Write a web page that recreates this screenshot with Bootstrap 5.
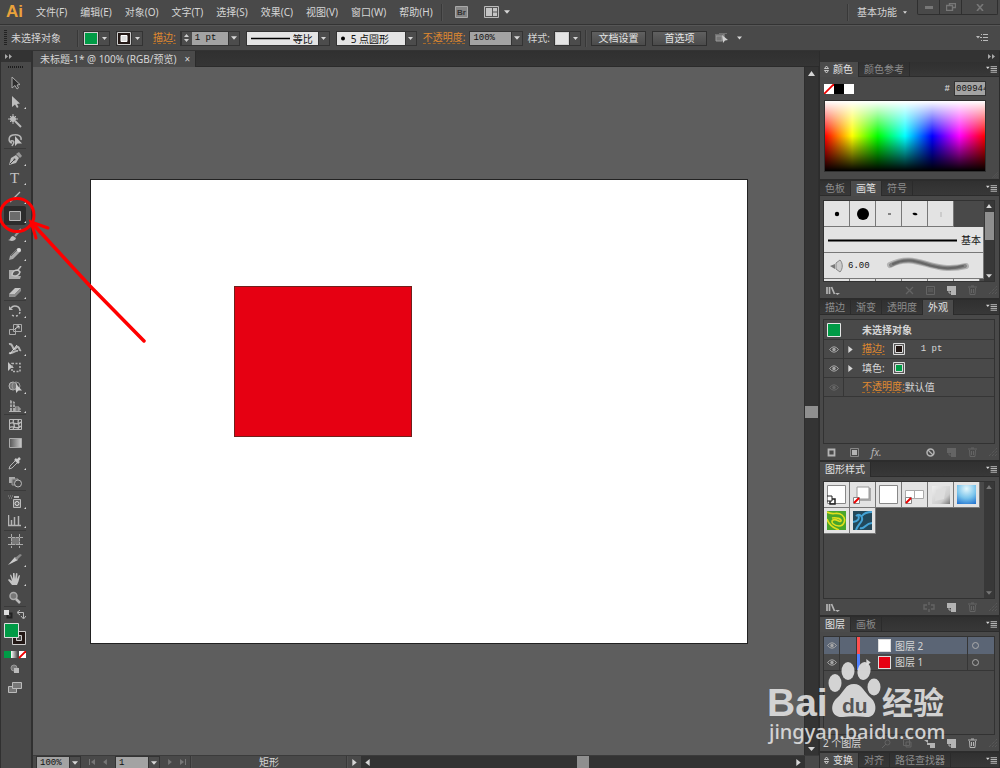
<!DOCTYPE html>
<html lang="zh-CN">
<head>
<meta charset="utf-8">
<meta name="viewport" content="width=device-width, initial-scale=1">
<title>未标题-1</title>
<link rel="stylesheet" href="https://cdn.jsdelivr.net/npm/bootstrap@5.3.0/dist/css/bootstrap.min.css">
<style>
:root{--ui:#494949;--edge:#323232;--ink:#d6d6d6;--dim:#8c8c8c;--orange:#e08a30;--green:#009b46}
body{background:var(--ui);color:var(--ink);font:10px/14px "Noto Sans","Noto Sans CJK SC",sans-serif;overflow:hidden}
svg{display:block;flex:none}
a{color:inherit;text-decoration:none}
button,input,select{font:inherit;color:inherit;border:0;border-radius:0;padding:0;margin:0;background:none;display:block;min-width:0}
select{appearance:none}
.numfont{font-family:"Liberation Mono","Noto Sans CJK SC",monospace;font-size:9px}
.menubar{height:25px;border-bottom:1px solid #333;padding-left:6px}
.applogo{color:#e9a23b;font:bold 17px/24px "Liberation Sans",sans-serif;width:30px}
.menubar nav{gap:13px}
.workspace{gap:6px;margin-right:10px}
.vsep{width:2px;height:17px;border-left:1px solid #383838;border-right:1px solid #525252}
.winbtns{border:1px solid #2f2f2f;border-top:0;border-radius:0 0 2px 2px;height:15px;margin-right:2px}
.winbtns button{height:14px;width:22px;display:grid;place-items:center;border-right:1px solid #2f2f2f}
.winbtns button:last-child{border:0;width:35px}
.optbar{height:26px;border-top:1px solid #565656;border-bottom:1px solid #333;padding:0 12px 0 4px}
.grip{width:3px;height:16px;background:repeating-linear-gradient(#222 0 1px,transparent 1px 2px);margin-right:4px}
.gap-l{margin-left:6px}
.combo{height:15px;border:1px solid #333;background:#3d3d3d}
.combo>input{background:#a3a3a3;color:#111;height:13px;padding-left:3px}
.combo>input.hexin{padding-left:1px;width:30px}
.drop{width:11px;height:13px;display:grid;place-items:center;background:#4c4c4c;border-left:1px solid #333}
.chip{width:14px;height:13px;border:1px solid #cfcfcf}
.lightbox{background:#e4e4e4;color:#111;height:13px}
.lightbox select{height:13px;color:#111}
.fly-a{color:var(--orange);border-bottom:1px dashed #a4692b;line-height:11px}
.strokelink{margin:0 4px 0 10px}
.pushbtn{height:15px;width:55px;border:1px solid #2f2f2f;background:linear-gradient(#606060,#4b4b4b);line-height:12px;text-align:center;color:#e4e4e4}
.toolbox{width:33px;border-right:2px solid #303030;border-left:1px solid #303030}
.stripe{height:11px;background:#333}
.toolgroup{box-shadow:0 -1px #3a3a3a;margin:0 5px 0 3px}
.toolgroup.first{box-shadow:none}
.toolgroup button,.tool{width:22px;height:19px;display:grid;place-items:center;position:relative;color:#b9b9b9}
.toolgroup .mini{width:9px;height:14px}
.fly::after{content:"";position:absolute;right:0;bottom:2px;border:solid transparent;border-width:1px;border-right-color:#d8d8d8;border-bottom-color:#d8d8d8}
.toolgroup button.chosen{background:#2c2c2c;border-radius:2px}
.tabstrip{height:16px;background:linear-gradient(#303030,#353535);border-bottom:1px solid #2b2b2b}
.doctab{background:#4a4a4a;height:16px;padding:0 5px 0 7px;border-right:1px solid #2b2b2b;line-height:17px}
.workarea{background:#5e5e5e}
.artboard{position:absolute;left:57px;top:112px;width:658px;height:465px;background:#fff;border:1px solid #222}
.redbox{position:absolute;left:143px;top:106px;width:178px;height:151px;background:#e60012;border:1px solid #70201c}
.vscroll{width:15px;background:#343434;border-left:1px solid #2e2e2e;border-right:1px solid #2e2e2e}
.thumb{background:#8f8f8f}
.statusbar{height:13px;overflow:hidden;border-top:1px solid #3b3b3b;padding-left:3px}
.statusbar .combo{height:13px}
.hscroll{background:#333;height:12px}
.dock{width:181px;border-left:1px solid #2c2c2c;background:#2c2c2c;padding-right:1px}
.pane{background:var(--ui);margin-bottom:2px}
.ptabs{height:15px;background:linear-gradient(#303030,#383838);border-bottom:1px solid #2c2c2c;padding-right:2px}
.ptabs button{height:15px;line-height:15px;padding:0 5px;color:var(--dim);border-right:1px solid #2b2b2b}
.ptabs button.on{background:#4b4b4b;color:#e2e2e2}
.well{border:1px solid #323232;margin:4px 4px 0 3px}
.pfoot{height:16px;padding:0 2px 0 6px}
.pfoot button{display:grid;place-items:center;color:#b4b4b4}
.pfoot .off{color:#646464}
.spectrum{height:72px;margin:4px 13px 0 4px;border:1px solid #303030;background:linear-gradient(#fff,rgba(255,255,255,0) 50%,rgba(0,0,0,0) 50%,#000),linear-gradient(90deg,red,#ff0 17%,#0f0 33%,#0ff 50%,#00f 67%,#f0f 84%,red)}
.tile{width:26px;height:26px;background:#e3e3e3;border-right:1px solid #777;border-bottom:1px solid #777;display:grid;place-items:center}
.sbar{width:10px;flex:none;background:#383838;padding:3px 0}
.approw{height:20px;border-bottom:1px solid #363636}
.approw+.approw{height:19px}
.eyecell{width:20px;align-self:stretch;display:grid;place-items:center;border-right:1px solid #363636;color:#a6a6a6}
.layerrow{height:17px}
.layerrow.on{background:#5b6575}
.layerrow .eyecell{width:16px}
.lock{width:17px;align-self:stretch;border-right:1px solid #363636}
.tgt{width:27px;align-self:stretch;border-left:1px solid #363636;display:grid;align-items:center;padding-left:4px}
.pic{width:13px;height:13px;border:1px solid #ddd}
.overlay-mark{position:absolute;pointer-events:none}
</style>
</head>
<body class="vh-100 d-flex flex-column">

<svg width="0" height="0" class="position-absolute" aria-hidden="true">
  <defs>
    <symbol id="dn" viewBox="0 0 7 4"><path d="M0 0h7L3.500 4z" fill="currentColor"/></symbol>
    <symbol id="rt" viewBox="0 0 5 8"><path d="M0 0v8l5-4z" fill="currentColor"/></symbol>
    <symbol id="lt" viewBox="0 0 5 8"><path d="M5 0v8L0 4z" fill="currentColor"/></symbol>
    <symbol id="up" viewBox="0 0 7 5"><path d="M0 5h7L3.500 0z" fill="currentColor"/></symbol>
    <symbol id="pm" viewBox="0 0 12 8"><path d="M0 1.500h4L2 4z" fill="currentColor"/><path d="M5 1.500h7M5 3.500h7M5 5.500h7M5 7.500h7" stroke="currentColor" stroke-width=".9"/></symbol>
    <symbol id="ud" viewBox="0 0 5 9"><path d="M.5 3.500l2-2.500 2 2.500zM.5 5.500l2 2.500 2-2.500z" fill="none" stroke="currentColor" stroke-width=".8"/></symbol>
    <symbol id="eye" viewBox="0 0 10 7"><path d="M.5 3.500Q5-2 9.500 3.500 5 9 .5 3.500z" fill="none" stroke="currentColor"/><circle cx="5" cy="3.500" r="1.700" fill="currentColor"/></symbol>
    <symbol id="lib" viewBox="0 0 14 9"><path d="M1 1v7M3.500 1v7M5.500 1l3 7" stroke="currentColor" stroke-width="1.700"/><path d="M9 7h5l-2.500 2z" fill="currentColor"/></symbol>
    <symbol id="newi" viewBox="0 0 9 9"><path d="M0 0h9v9H4V5H0z" fill="currentColor"/><path d="M1 6h2v2" fill="none" stroke="currentColor"/></symbol>
    <symbol id="bin" viewBox="0 0 9 10"><path d="M0 2h9M3 1h3M1.500 3l.5 6.500h5L7.500 3M3.500 4v4M5.500 4v4" fill="none" stroke="currentColor"/></symbol>
    <symbol id="gripc" viewBox="0 0 8 8"><path d="M0 8l8-8M3 8l5-5M6 8l2-2" stroke="#606060" stroke-dasharray="1 1"/></symbol>
    <symbol id="none" viewBox="0 0 10 10"><path fill="#fff" d="M0 0h10v10H0z"/><path d="M0 10L10 0" stroke="#e00" stroke-width="1.800"/></symbol>
  </defs>
</svg>

<header class="menubar d-flex align-items-center flex-shrink-0">
  <span class="applogo">Ai</span>
  <nav class="d-flex">
    <a href="#">文件(F)</a><a href="#">编辑(E)</a><a href="#">对象(O)</a><a href="#">文字(T)</a><a href="#">选择(S)</a><a href="#">效果(C)</a><a href="#">视图(V)</a><a href="#">窗口(W)</a><a href="#">帮助(H)</a>
  </nav>
  <span class="vsep ms-2 me-2"></span>
  <button aria-label="Bridge" class="ms-1"><svg width="13" height="12"><path d="M.5.5h12v11H.5z" fill="#858585" stroke="#a9a9a9"/><text x="2" y="9" font-size="8" font-weight="bold" font-family="Liberation Sans" fill="#333">Br</text></svg></button>
  <button aria-label="排列文档" class="ms-3 d-flex align-items-center gap-1"><svg width="16" height="12"><path d="M.5.5h14v11H.5z" fill="#555" stroke="#bbb"/><path d="M2 2h6v8H2zM9 2h4v3.500H9zM9 6.500h4V10H9z" fill="#c5c5c5"/></svg><svg width="6" height="4"><use href="#dn"/></svg></button>
  <span class="vsep ms-auto me-2"></span>
  <button class="workspace d-flex align-items-center">基本功能 <svg width="4" height="3"><use href="#dn"/></svg></button>
  <div class="winbtns d-flex align-self-start">
    <button aria-label="最小化"><svg width="8" height="3"><path fill="#777" d="M0 0h8v3H0z"/></svg></button>
    <button aria-label="还原"><svg width="10" height="8" fill="none" stroke="#777"><path d="M3.500 2.500v-2h6v4h-3M.5 2.500h6v5h-6z" stroke-width="1.400"/></svg></button>
    <button aria-label="关闭"><svg width="8" height="7"><path d="M1 0l6 7M7 0L1 7" stroke="#777" stroke-width="1.600"/></svg></button>
  </div>
</header>

<div class="optbar d-flex align-items-center flex-shrink-0">
  <span class="grip"></span><span style="width:66px">未选择对象</span>
  <span class="vsep me-1"></span>
  <div class="combo d-flex"><span class="chip" style="background:#009b46"></span><button class="drop" aria-label="填色"><svg width="5" height="3"><use href="#dn"/></svg></button></div>
  <div class="combo d-flex gap-l"><svg width="14" height="13"><path d="M.5.5h13v12H.5z" fill="#231815" stroke="#ccc"/><path d="M4 3.500h6v6H4z" fill="#ddd" stroke="#fff"/></svg><button class="drop" aria-label="描边颜色"><svg width="5" height="3"><use href="#dn"/></svg></button></div>
  <a href="#" class="fly-a strokelink">描边:</a>
  <div class="combo d-flex">
    <button class="drop" aria-label="粗细增减"><svg width="5" height="10"><path d="M0 4h5L2.500 1zM0 6h5L2.500 9z" fill="#ccc"/></svg></button>
    <input class="numfont" style="width:36px" value="1 pt" aria-label="描边粗细"><button class="drop" aria-label="粗细列表"><svg width="6" height="4"><use href="#dn"/></svg></button></div>
  <div class="combo d-flex gap-l">
    <label class="lightbox d-flex align-items-center"><svg width="46" height="13"><path d="M4 6.500h39" stroke="#000" stroke-width="1.500"/></svg><select style="width:25px" aria-label="变量宽度"><option>等比</option></select></label><span class="drop"><svg width="5" height="3"><use href="#dn"/></svg></span></div>
  <div class="combo d-flex gap-l">
    <label class="lightbox d-flex align-items-center"><svg width="14" height="13"><circle cx="6" cy="6.500" r="2" fill="#000"/></svg><select style="width:54px" aria-label="画笔定义"><option>5 点圆形</option></select></label><span class="drop"><svg width="5" height="3"><use href="#dn"/></svg></span></div>
  <a href="#" class="fly-a gap-l me-1">不透明度:</a>
  <div class="combo d-flex"><input class="numfont" style="width:41px" value="100%" aria-label="不透明度"><button class="drop" aria-label="不透明度列表"><svg width="6" height="4"><use href="#dn"/></svg></button></div>
  <span class="ms-1 me-1">样式:</span>
  <div class="combo d-flex"><span class="chip" style="background:#e4e4e4"></span><button class="drop" aria-label="图形样式"><svg width="5" height="3"><use href="#dn"/></svg></button></div>
  <span class="vsep mx-1"></span>
  <button class="pushbtn">文档设置</button><button class="pushbtn gap-l">首选项</button>
  <button class="d-flex align-items-center gap-2 ms-2" aria-label="选择类似的对象"><svg width="14" height="11"><path d="M1 3h6v5H1zM0 2h9M9 1v4M4 0h8" fill="#777" stroke="#999"/><path d="M7 2l6 5-3 .5L8 10z" fill="#d0d0d0"/></svg><svg width="5" height="4"><use href="#dn"/></svg></button>
  <button class="ms-auto" aria-label="控制面板菜单"><svg width="12" height="8"><path d="M0 2h4L2 4.500z" fill="#bbb"/><path d="M5 .5h1M7 .5h5M4 3.500h2M7 3.500h5M5 6.500h1M7 6.500h5" stroke="#bbb"/></svg></button>
</div>

<div class="d-flex flex-grow-1" style="min-height:0">
  <aside class="toolbox flex-shrink-0" aria-label="工具">
    <div class="stripe d-flex align-items-center ps-1"><svg width="7" height="5" fill="#aaa"><path d="M0 0v5l3-2.500zM4 0v5l3-2.500z"/></svg></div>
    <div class="d-flex justify-content-center pt-1" style="height:11px"><svg width="16" height="2"><path d="M0 1h16" stroke="#1c1c1c" stroke-width="2" stroke-dasharray="1 1"/></svg></div>

    <div class="toolgroup first">
      <button aria-label="选择"><svg width="14" height="14"><path d="M4 1v11l3-2.500 2 3.500 1.500-1L9 9l3-.5z" fill="#2d2d2d" stroke="#aaa"/></svg></button>
      <button class="fly" aria-label="直接选择"><svg width="14" height="14"><path d="M4 1v11l3-2.500 2 3.500 1.500-1L9 9l3-.5z" fill="#bdbdbd"/></svg></button>
      <button aria-label="魔棒"><svg width="14" height="14" stroke="#bbb"><circle cx="5" cy="5" r="2.500" fill="#bbb"/><path d="M5 0v10M0 5h10M2 2l6 6M8 2L2 8"/><path d="M7 7l6 6" stroke-width="2"/></svg></button>
      <button aria-label="套索"><svg width="15" height="14"><path d="M4 10C0 9 0 3 5 2s9 1 8 5M4 10c-2-1-1-3 1-2s0 3-1 5" fill="none" stroke="#b5b5b5" stroke-width="1.500"/><path d="M7 3v10l2.500-2.500H14z" fill="#c5c5c5"/></svg></button>
    </div>
    <div class="toolgroup">
      <button class="fly" aria-label="钢笔"><svg width="14" height="14"><path d="M1 13L3 6l5-3 3 3-3 5z" fill="#bbb"/><path d="M8 2l4 4 2-2-3-4z" fill="#999"/><path d="M2 12l4-4" stroke="#444"/><circle cx="6.500" cy="7.500" r="1" fill="#444"/></svg></button>
      <button class="fly" aria-label="文字"><svg width="14" height="14"><text x="2" y="12" font-size="15" font-family="Liberation Serif" fill="#c4c4c4">T</text></svg></button>
      <button class="fly" aria-label="直线段"><svg width="14" height="14"><path d="M2 12L12 2" stroke="#b5b5b5" stroke-width="1.300"/></svg></button>
      <button class="fly chosen" aria-label="矩形"><svg width="12" height="10"><path d="M.5.5h11v9H.5z" fill="#6b6b6b" stroke="#b5b5b5"/></svg></button>
      <button class="fly" aria-label="画笔"><svg width="14" height="14"><path d="M0 12c3 0 2-4 5-4l3 2c-1 4-6 3-8 2z" fill="#bbb"/><path d="M7 8l6-7" stroke="#999" stroke-width="2"/></svg></button>
      <button class="fly" aria-label="铅笔"><svg width="14" height="14"><path d="M1 13l1-4 8-8 3 3-8 8z" fill="#a9a9a9"/><circle cx="11" cy="3" r="2" fill="#ddd"/><path d="M3 9l6-6" stroke="#666"/></svg></button>
      <button aria-label="斑点画笔"><svg width="14" height="14"><path d="M1 4h7v6h5l-1 3H1z" fill="#aaa"/><path d="M4 9c0-4 4-5 6-5l2 2c-1 4-5 5-8 3z" fill="#555" stroke="#c5c5c5" stroke-width="1.500"/><path d="M10 4l3-4" stroke="#bbb" stroke-width="1.500"/></svg></button>
      <button class="fly" aria-label="橡皮擦"><svg width="14" height="14"><path d="M1 9l6-6h6l-6 6z" fill="#c5c5c5"/><path d="M1 9h6v3H1zM7 9l6-6v3l-6 6z" fill="#8d8d8d"/></svg></button>
    </div>
    <div class="toolgroup">
      <button class="fly" aria-label="旋转"><svg width="14" height="14" fill="none" stroke="#bbb"><path d="M3 4a5 5 0 0 1 9 3" stroke-width="1.500"/><path d="M12 8a5 5 0 0 1-9 2" stroke-dasharray="2 2" stroke-width="1.500"/><path d="M1 2v4h4z" fill="#bbb" stroke="none"/></svg></button>
      <button class="fly" aria-label="比例缩放"><svg width="15" height="14" fill="none" stroke="#aaa"><path d="M5.500 1.500h8v7h-8zM1.500 6.500h6v5h-6z"/><path d="M7 6l4-3M8.500 3H11v2.500" stroke="#ddd"/></svg></button>
      <button class="fly" aria-label="宽度"><svg width="14" height="14"><path d="M1 2c4-1 3 4 5 5s2-3 4-2 1 4 3 3M1 11c4 1 6-3 9-2" fill="none" stroke="#b5b5b5" stroke-width="2"/><path d="M2 12L9 3" stroke="#ddd"/></svg></button>
      <button aria-label="自由变换"><svg width="14" height="13"><path d="M0 1v9l3-3h3z" fill="#c5c5c5"/><path d="M4 2.500h8v8H4z" fill="none" stroke="#b5b5b5" stroke-width="1.500" stroke-dasharray="2 1.500"/></svg></button>
      <button class="fly" aria-label="形状生成器"><svg width="15" height="14"><circle cx="5" cy="6" r="4" fill="#777" stroke="#b5b5b5"/><circle cx="8" cy="6" r="4" fill="none" stroke="#999"/><path d="M8 4v9l2.500-2.500H14z" fill="#ccc"/></svg></button>
      <button class="fly" aria-label="透视网格"><svg width="14" height="14"><path d="M2 1l5 2v9H2z" fill="#a5a5a5"/><path d="M7 8h4v4H7zM1 12.500h12M7 10h6" fill="none" stroke="#b5b5b5"/><path d="M2 5h5M2 8.500h5M4.500 2v10" stroke="#555"/></svg></button>
    </div>
    <div class="toolgroup">
      <button aria-label="网格"><svg width="13" height="12" fill="none" stroke="#bbb"><path d="M.5.5h12v10H.5z"/><path d="M0 5c4-4 8 3 12-2M0 9c4-4 8 3 12-2M5 0c-3 4 3 6-1 10M10 0c-3 4 2 6-1 10" stroke-width="1.300"/></svg></button>
      <button aria-label="渐变"><svg width="13" height="11"><defs><linearGradient id="g1"><stop stop-color="#555"/><stop offset="1" stop-color="#ccc"/></linearGradient></defs><path d="M.5.5h12v9H.5z" fill="url(#g1)" stroke="#aaa"/></svg></button>
      <button class="fly" aria-label="吸管"><svg width="14" height="14"><path d="M1 13l1-3 6-6 2 2-6 6z" fill="none" stroke="#b5b5b5"/><path d="M7 3l4 4M9 5l3-3" stroke="#c8c8c8" stroke-width="2.500"/></svg></button>
      <button aria-label="混合"><svg width="15" height="12"><path d="M1 1h6v6H1z" fill="#aaa"/><path d="M4 3h6v6H4z" fill="#666" stroke="#999"/><circle cx="10" cy="7.500" r="3.500" fill="#4a4a4a" stroke="#bbb"/></svg></button>
    </div>
    <div class="toolgroup" style="padding:1px 0">
      <button class="fly" aria-label="符号喷枪"><svg width="14" height="14"><path d="M0 1h5M1 3h4" stroke="#999" stroke-dasharray="1 1"/><path d="M6 1h5v2H6z" fill="#bbb"/><path d="M5.500 4.500h7v8h-7z" fill="#666" stroke="#bbb"/><circle cx="9" cy="8.500" r="2" fill="none" stroke="#ddd"/></svg></button>
      <button class="fly" aria-label="柱形图"><svg width="14" height="13"><path d="M.5 1v10.500H13M3.500 11V6M6.500 11V3M10.500 11V2" fill="none" stroke="#b5b5b5" stroke-width="1.500"/></svg></button>
    </div>
    <div class="toolgroup">
      <button aria-label="画板"><svg width="15" height="14"><path d="M3 3h9v8H3z" fill="#777"/><path d="M3.500 0v14M11.500 0v14M0 3.500h15M0 10.500h15" stroke="#aaa" stroke-dasharray="3 1"/></svg></button>
      <button class="fly" aria-label="切片"><svg width="14" height="13"><path d="M0 12L7 4l3 3z" fill="#ccc"/><path d="M7 5l5-4 2 1-5 5z" fill="#888"/></svg></button>
      <button class="fly" aria-label="抓手"><svg width="14" height="14"><path d="M4 13L0 8l1-1 3 2-2-6 1-.5L5 7 5 1h1.500L7 7l1-6 1.500.5L9 7l2-4 1 .5-1.500 6L9 13z" fill="#c4c4c4"/></svg></button>
      <button aria-label="缩放"><svg width="14" height="14"><circle cx="5.500" cy="5" r="3.500" fill="#777" stroke="#aaa" stroke-width="1.500"/><path d="M8 8l4 4" stroke="#bbb" stroke-width="2.500"/></svg></button>
    </div>
    <div class="toolgroup">
      <div class="d-flex justify-content-between" style="height:16px">
        <button class="mini" aria-label="默认填色和描边"><svg width="9" height="9"><path d="M3.500 3.500h4v4h-4z" fill="none" stroke="#222" stroke-width="2"/><path d="M0 0h5v5H0z" fill="#ddd"/></svg></button>
        <button class="mini" aria-label="互换填色和描边"><svg width="9" height="9"><path d="M1 2.500h5.500V8M3 0L0 2.500 3 5M4 6l2.500 3L9 6" fill="none" stroke="#bbb"/></svg></button>
      </div>
      <svg width="23" height="24" role="img" aria-label="填色和描边"><path d="M8.500 8.500h13v13h-13z" fill="#231815" stroke="#ccc"/><path d="M12.500 12.500h5v5h-5z" fill="#4a4a4a" stroke="#ccc"/><path d="M.5.5h14v14H.5z" fill="#009b46" stroke="#ddd"/></svg>
      <svg width="22" height="8" class="mt-1" role="img" aria-label="颜色模式"><defs><linearGradient id="g2"><stop stop-color="#fff"/><stop offset="1" stop-color="#444"/></linearGradient></defs><path fill="#009b46" d="M0 0h7v7H0z"/><path fill="url(#g2)" d="M7 0h7v7H7z"/><path fill="#fff" d="M15 0h7v7h-7z"/><path d="M15 7l7-7" stroke="#e00" stroke-width="1.800"/></svg>
      <button aria-label="绘图模式"><svg width="10" height="9"><circle cx="4" cy="4" r="3" fill="#777" stroke="#999"/><path d="M4 4h5v5H4z" fill="#bbb"/></svg></button>
      <button aria-label="屏幕模式"><svg width="14" height="11"><path d="M.5 4.500h8v6h-8z" fill="#777" stroke="#bbb"/><path d="M4.500.5h9v6h-9z" fill="#777" stroke="#bbb"/></svg></button>
    </div>
  </aside>

  <main class="d-flex flex-column flex-grow-1" style="min-width:0">
    <div class="tabstrip d-flex">
      <button class="doctab d-flex">未标题-1* @ 100% (RGB/预览)<span class="ms-2">×</span></button>
    </div>
    <div class="d-flex flex-grow-1">
      <div class="workarea position-relative flex-grow-1 overflow-hidden">
        <div class="artboard"><div class="redbox"></div></div>
      </div>
      <div class="vscroll d-flex flex-column align-items-center justify-content-between py-1"><svg width="7" height="5"><use href="#up"/></svg><span class="thumb w-100" style="height:12px"></span><svg width="7" height="4"><use href="#dn"/></svg></div>
    </div>
    <div class="statusbar d-flex align-items-center">
      <div class="combo d-flex"><input class="numfont" style="width:32px" value="100%" aria-label="缩放级别"><button class="drop" aria-label="缩放列表"><svg width="6" height="4"><use href="#dn"/></svg></button></div>
      <button class="ms-2" aria-label="首项"><svg width="6" height="6"><path d="M0 0h1v6H0zM6 0v6L2 3z" fill="#777"/></svg></button>
      <button class="ms-2" aria-label="上一项" style="color:#777"><svg width="4" height="6"><use href="#lt"/></svg></button>
      <div class="combo d-flex ms-2"><input class="numfont" style="width:32px" value="1" aria-label="画板导航"><button class="drop" aria-label="画板列表"><svg width="6" height="4"><use href="#dn"/></svg></button></div>
      <button class="ms-2" aria-label="下一项" style="color:#777"><svg width="4" height="6"><use href="#rt"/></svg></button>
      <button class="ms-2 me-1" aria-label="末项"><svg width="6" height="6"><path d="M5 0h1v6H5zM0 0v6l4-3z" fill="#777"/></svg></button>
      <span class="vsep"></span><span class="text-center" style="width:154px">矩形</span><span class="vsep"></span>
      <button class="mx-1" aria-label="状态菜单"><svg width="5" height="7"><use href="#rt"/></svg></button>
      <div class="hscroll flex-grow-1 d-flex align-items-center justify-content-between px-1"><svg width="5" height="7"><use href="#lt"/></svg><span class="thumb h-100" style="width:12px"></span><svg width="5" height="7"><use href="#rt"/></svg></div>
      <span style="width:14px"></span>
    </div>
  </main>

  <aside class="dock flex-shrink-0 d-flex flex-column" aria-label="面板">
    <div class="stripe d-flex align-items-center justify-content-end pe-1"><svg width="7" height="5" fill="#aaa"><path d="M0 0v5l3-2.500zM4 0v5l3-2.500z"/></svg></div>

    <section class="pane" style="height:117px">
      <div class="ptabs d-flex align-items-center"><button class="on d-flex align-items-center gap-1 ps-1"><svg width="5" height="9"><use href="#ud"/></svg>颜色</button><button>颜色参考</button><svg class="ms-auto" width="11" height="8"><use href="#pm"/></svg></div>
      <div class="d-flex align-items-center pt-1 ps-1">
        <svg width="30" height="10"><use href="#none" width="10" height="10"/><path d="M10 0h10v10H10z"/><path fill="#fff" d="M20 0h10v10H20z"/></svg>
        <label for="hex" class="ms-auto me-1 fw-bold numfont">#</label>
        <div class="combo" style="margin-right:13px"><input id="hex" class="numfont hexin" value="009944"></div>
      </div>
      <div class="spectrum"></div>
      <svg class="ms-auto" width="8" height="6"><use href="#gripc"/></svg>
    </section>

    <section class="pane">
      <div class="ptabs d-flex align-items-center"><button>色板</button><button class="on">画笔</button><button>符号</button><svg class="ms-auto" width="11" height="8"><use href="#pm"/></svg></div>
      <div class="well d-flex overflow-hidden" style="height:82px">
        <div class="flex-grow-1 overflow-hidden">
          <div class="d-flex">
            <span class="tile"><svg width="20" height="20"><circle cx="10" cy="10" r="2.200"/></svg></span><span class="tile"><svg width="20" height="20"><circle cx="10" cy="10" r="6"/></svg></span><span class="tile"><svg width="20" height="20"><path d="M9 10h3" stroke="#222"/></svg></span><span class="tile"><svg width="20" height="20"><ellipse cx="10" cy="10" rx="2.500" ry="1.200" transform="rotate(12 10 10)"/></svg></span><span class="tile"><svg width="20" height="20"><path d="M10 8v5" stroke="#999" stroke-width=".6"/></svg></span>
          </div>
          <div class="tile w-100 d-flex align-items-center"><svg width="133" height="10"><path d="M4 5.500h129" stroke="#000" stroke-width="2"/></svg><span class="ms-1" style="color:#111">基本</span></div>
          <div class="tile w-100 d-flex align-items-center"><svg width="24" height="14"><path d="M6 7l5-2v5z" fill="#777"/><path d="M12 4l4-3c3 3 3 9 0 12l-4-3z" fill="#ccc" stroke="#888"/></svg><span class="numfont" style="color:#111">6.00</span><svg class="ms-auto" width="98" height="22"><g fill="none" stroke-linecap="round"><path d="M5 10C32-4 46 20 81 11" stroke="#b4b4b4" stroke-width="6"/><path d="M6 10C32-4 46 20 80 11" stroke="#858585" stroke-width="4"/><path d="M8 9C32-3 46 20 78 11" stroke="#666" stroke-width="2"/></g></svg></div>
          <div class="d-flex"><span class="tile"></span><span class="tile"></span><span class="tile"></span><span class="tile"></span><span class="tile"></span><span class="tile"></span></div>
        </div>
        <div class="sbar d-flex flex-column align-items-center"><svg width="6" height="4"><use href="#up"/></svg><span class="thumb mt-1 mb-auto" style="width:9px;height:28px"></span><svg width="6" height="4"><use href="#dn"/></svg></div>
      </div>
      <div class="pfoot d-flex align-items-center gap-2"><button aria-label="画笔库"><svg width="14" height="9"><use href="#lib"/></svg></button><button class="off ms-auto" aria-label="移去描边"><svg width="9" height="9"><path d="M1 1l7 7M8 1L1 8" stroke="currentColor" stroke-width="1.300"/></svg></button><button class="off mx-1" aria-label="选项"><svg width="9" height="9"><path d="M.5.500h8v8h-8zM2 3h5M2 5h5" fill="none" stroke="currentColor"/></svg></button><button class="me-1" aria-label="新建画笔"><svg width="9" height="9"><use href="#newi"/></svg></button><button class="off me-1" aria-label="删除画笔"><svg width="9" height="10"><use href="#bin"/></svg></button><svg width="8" height="8"><use href="#gripc"/></svg></div>
    </section>

    <section class="pane">
      <div class="ptabs d-flex align-items-center"><button>描边</button><button>渐变</button><button>透明度</button><button class="on">外观</button><svg class="ms-auto" width="11" height="8"><use href="#pm"/></svg></div>
      <div class="well" style="height:125px">
        <div class="approw d-flex align-items-center"><svg width="38" height="14"><path d="M3.500.5h13v13h-13z" fill="#009b46" stroke="#e6e6e6"/></svg><b>未选择对象</b></div>
        <div class="approw d-flex align-items-center"><span class="eyecell"><svg width="10" height="7"><use href="#eye"/></svg></span><svg width="5" height="7" class="ms-1"><use href="#rt"/></svg><a href="#" class="fly-a" style="margin-left:9px">描边:</a><svg width="12" height="12" class="ms-2 me-3"><path d="M.5.500h11v11H.5z" fill="#555" stroke="#ddd"/><path d="M2.500 2.500h7v7h-7z" fill="#231815" stroke="#ddd"/></svg><span class="numfont">1 pt</span></div>
        <div class="approw d-flex align-items-center"><span class="eyecell"><svg width="10" height="7"><use href="#eye"/></svg></span><svg width="5" height="7" class="ms-1"><use href="#rt"/></svg><span style="margin-left:9px">填色:</span><svg width="12" height="12" class="ms-2"><path d="M.5.500h11v11H.5z" fill="#555" stroke="#ddd"/><path d="M2.500 2.500h7v7h-7z" fill="#009b46" stroke="#ddd"/></svg></div>
        <div class="approw d-flex align-items-center"><span class="eyecell" style="color:#666"><svg width="10" height="7"><use href="#eye"/></svg></span><a href="#" class="fly-a" style="margin-left:18px">不透明度:</a><span>默认值</span></div>
      </div>
      <div class="pfoot d-flex align-items-center gap-2"><button aria-label="添加新描边"><svg width="12" height="9"><path d="M2.500 1.500h6v6h-6z" fill="none" stroke="currentColor" stroke-width="1.800"/></svg></button><button class="mx-1" aria-label="添加新填色"><svg width="9" height="9"><path d="M.5.500h8v8h-8z" fill="none" stroke="#888"/><path d="M2 2h5v5H2z" fill="currentColor"/></svg></button><button aria-label="添加新效果"><i>fx.</i></button><button class="ms-auto me-1" aria-label="清除外观"><svg width="9" height="9" fill="none" stroke="currentColor"><circle cx="4.500" cy="4.500" r="3.500" stroke-width="1.500"/><path d="M2 2l5 5" stroke-width="1.300"/></svg></button><button class="off me-1" aria-label="复制项目"><svg width="9" height="9"><use href="#newi"/></svg></button><button class="off me-1" aria-label="删除项目"><svg width="9" height="10"><use href="#bin"/></svg></button><svg width="8" height="8"><use href="#gripc"/></svg></div>
    </section>

    <section class="pane">
      <div class="ptabs d-flex align-items-center"><button class="on">图形样式</button><svg class="ms-auto" width="11" height="8"><use href="#pm"/></svg></div>
      <div class="well d-flex" style="height:118px">
        <div class="flex-grow-1 d-flex flex-wrap align-content-start">
          <span class="tile"><svg width="20" height="20"><path d="M.5.500h18v18H.5z" fill="#fff" stroke="#888"/><path d="M3 14h5v5H3z" fill="none" stroke="#222" stroke-width="1.500"/><path d="M0 11h5v5H0z" fill="#fff" stroke="#222"/></svg></span>
          <span class="tile"><svg width="20" height="20"><path d="M5 3h13v13H5z" fill="#aaa"/><path d="M4 2h12v12H4z" fill="#fff" stroke="#999"/><path d="M.5 12.500h6v6h-6z" fill="#fff" stroke="#888"/><path d="M1 18l5-5" stroke="#e00" stroke-width="2"/></svg></span>
          <span class="tile"><svg width="20" height="20"><path d="M.5.500h18v18H.5z" fill="#fff" stroke="#888"/></svg></span>
          <span class="tile"><svg width="20" height="20"><path d="M.5 5.500h9v8h-9zM9.500 5.500h9v8h-9z" fill="#fff" stroke="#aaa"/><path d="M.5 12.500h6v6h-6z" fill="#fff" stroke="#888"/><path d="M1 18l5-5" stroke="#e00" stroke-width="2"/></svg></span>
          <span class="tile"><svg width="20" height="20"><defs><linearGradient id="g3" x2="1" y2="1"><stop stop-color="#eee"/><stop offset=".7" stop-color="#ccc"/><stop offset="1" stop-color="#777"/></linearGradient></defs><path d="M1 1h18v18H1z" fill="url(#g3)"/><path d="M5 5l10-2-2 11-9 2z" fill="#ddd"/></svg></span>
          <span class="tile"><svg width="20" height="20"><defs><radialGradient id="g4" cx=".5" cy=".2" r=".9"><stop stop-color="#e6f8fc"/><stop offset=".55" stop-color="#7ac4ec"/><stop offset="1" stop-color="#2374cf"/></radialGradient></defs><path d="M0 0h19v19H0z" fill="url(#g4)"/></svg></span>
          <span class="tile"><svg width="19" height="19"><path fill="#49a52c" d="M0 0h19v19H0z"/><path d="M0 1c6 4 10-1 15 3s2 11-3 11-9-4-6-6 7 3 8 1-5-4-9-3M0 8c2 6 6 9 12 11" fill="none" stroke="#e2df1c" stroke-width="1.600"/></svg></span>
          <span class="tile"><svg width="19" height="19"><path fill="#23485a" d="M0 0h19v19H0z"/><path d="M0 11c5-1 7-3 5-7M3 5c4-4 8 2 5 6s-4 5-5 8M9 5c2-3 6-4 10-4M7 17c5 2 5-5 12-5" fill="none" stroke="#44a3d6" stroke-width="2"/></svg></span>
        </div>
        <div class="sbar d-flex flex-column align-items-center justify-content-between" style="color:#777"><svg width="6" height="4"><use href="#up"/></svg><svg width="6" height="4"><use href="#dn"/></svg></div>
      </div>
      <div class="pfoot d-flex align-items-center gap-2"><button aria-label="图形样式库"><svg width="14" height="9"><use href="#lib"/></svg></button><button class="off ms-auto me-1" aria-label="断开链接"><svg width="12" height="10" fill="none" stroke="currentColor"><path d="M4 3H1v4h3M8 3h3v4H8M6 0v3M6 7v3" stroke-width="1.400"/></svg></button><button class="me-1" aria-label="新建图形样式"><svg width="9" height="9"><use href="#newi"/></svg></button><button class="off me-1" aria-label="删除图形样式"><svg width="9" height="10"><use href="#bin"/></svg></button><svg width="8" height="8"><use href="#gripc"/></svg></div>
    </section>

    <section class="pane flex-grow-1 d-flex flex-column">
      <div class="ptabs d-flex align-items-center"><button class="on">图层</button><button>画板</button><svg class="ms-auto" width="11" height="8"><use href="#pm"/></svg></div>
      <div class="well flex-grow-1">
        <div class="layerrow on d-flex align-items-center"><span class="eyecell"><svg width="10" height="7"><use href="#eye"/></svg></span><span class="lock"></span><span class="align-self-stretch" style="width:3px;background:#ff5050"></span><span class="pic me-1" style="margin-left:18px;background:#fff"></span><span class="flex-grow-1">图层 2</span><span class="tgt"><svg width="7" height="7"><circle cx="3.500" cy="3.500" r="3" fill="none" stroke="#aaa"/></svg></span></div>
        <div class="layerrow d-flex align-items-center" style="border-bottom:1px solid #363636"><span class="eyecell"><svg width="10" height="7"><use href="#eye"/></svg></span><span class="lock"></span><span class="align-self-stretch" style="width:3px;background:#4f80ff"></span><svg width="5" height="7" style="margin:0 7px 0 6px"><use href="#rt"/></svg><span class="pic me-1" style="background:#e60012"></span><span class="flex-grow-1">图层 1</span><span class="tgt"><svg width="7" height="7"><circle cx="3.500" cy="3.500" r="3" fill="none" stroke="#aaa"/></svg></span></div>
      </div>
      <div class="pfoot d-flex align-items-center gap-2" style="padding-left:3px"><span>2 个图层</span><button class="off ms-auto" aria-label="定位对象"><svg width="9" height="9" fill="none" stroke="currentColor"><circle cx="5.500" cy="3.500" r="2.500"/><path d="M4 5L0 9"/></svg></button><button class="off mx-1" aria-label="剪切蒙版"><svg width="9" height="9" fill="none" stroke="currentColor"><path d="M.5.500h6v6h-6zM3 3h5v5H3z"/></svg></button><button class="me-1" aria-label="新建子图层"><svg width="11" height="9"><path d="M0 1h4v3M3 4h8v5H6V6H3z" fill="currentColor"/></svg></button><button class="me-1" aria-label="新建图层"><svg width="9" height="9"><use href="#newi"/></svg></button><button class="me-1" aria-label="删除图层"><svg width="9" height="10"><use href="#bin"/></svg></button><svg width="8" height="8"><use href="#gripc"/></svg></div>
    </section>

    <section class="pane mb-0">
      <div class="ptabs d-flex align-items-center"><button class="on d-flex align-items-center gap-1 ps-1"><svg width="5" height="9"><use href="#ud"/></svg>变换</button><button>对齐</button><button>路径查找器</button><svg class="ms-auto" width="11" height="8"><use href="#pm"/></svg></div>
    </section>
  </aside>
</div>

<!-- Hand-drawn callout round the rectangle tool -->
<svg class="overlay-mark" style="left:0;top:190px" width="150" height="160" fill="none" stroke="#f00" stroke-linecap="round"><ellipse cx="17" cy="25" rx="17" ry="16.500" stroke-width="3"/><path d="M144 151L90 96 32 33" stroke-width="3.500"/><path d="M48 38L31 32l5 16" stroke-width="3"/></svg>

<!-- Site watermark -->
<svg class="overlay-mark" style="right:50px;bottom:20px" width="185" height="93" fill="#e0e0e0" fill-opacity=".92">
  <text x="2" y="61" font-family="Liberation Sans" font-weight="bold" font-size="39">Bai</text>
  <ellipse cx="70" cy="28" rx="6.500" ry="9"/><ellipse cx="83" cy="16" rx="6.500" ry="9"/><ellipse cx="99" cy="16" rx="6.500" ry="9" transform="rotate(12 99 16)"/><ellipse cx="109" cy="32" rx="6.500" ry="8.500"/>
  <path d="M89 29c8 0 10 8 17 14s6 20-5 19c-8-1-16-1-23 0-12 1-14-12-6-19s8-14 17-14z"/>
  <text x="77" y="58" font-family="Liberation Sans" font-weight="bold" font-size="21" fill="#4a4a4a">du</text>
  <text x="117" y="59" font-family="Noto Sans CJK SC" font-weight="bold" font-size="31">经验</text>
  <text x="4" y="84" font-family="Noto Sans" font-weight="500" font-size="20">jingyan.baidu.com</text>
</svg>
<script src="https://cdn.jsdelivr.net/npm/bootstrap@5.3.0/dist/js/bootstrap.bundle.min.js"></script>
</body>
</html>
